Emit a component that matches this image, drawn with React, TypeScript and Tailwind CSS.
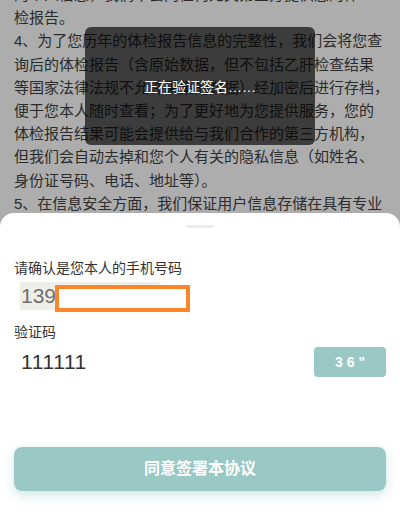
const LINES = [
  '的个人信息，我们不会向任何无关第三方提供您的体',
  '检报告。',
  '4、为了您历年的体检报告信息的完整性，我们会将您查',
  '询后的体检报告（含原始数据，但不包括乙肝检查结果',
  '等国家法律法规不允许采集的数据）经加密后进行存档，',
  '便于您本人随时查看；为了更好地为您提供服务，您的',
  '体检报告结果可能会提供给与我们合作的第三方机构，',
  '但我们会自动去掉和您个人有关的隐私信息（如姓名、',
  '身份证号码、电话、地址等）。',
  '5、在信息安全方面，我们保证用户信息存储在具有专业',
  '资质的服务器中，并采取严格的安全措施防止泄露。',
]

const cjk = "font-['Liberation_Sans','Noto_Sans_CJK_SC',sans-serif]"

export default function App() {
  return (
    <div className={`relative h-[523px] w-[400px] overflow-hidden bg-[#adadad] ${cjk}`}>
      {/* agreement text behind the mask */}
      <div className="mt-[-17px] px-[14px] text-[15px] leading-[23.2px] text-[#2b2b2b]">
        {LINES.map((l, i) => (
          <div key={i} className="whitespace-nowrap">{l}</div>
        ))}
      </div>

      {/* toast */}
      <div className="absolute left-[85px] top-[27px] flex h-[118px] w-[230px] items-center justify-center rounded-[6px] bg-black/65 pt-[2px] text-[14px] text-white">
        正在验证签名……
      </div>

      {/* bottom sheet */}
      <div className="absolute inset-x-0 bottom-0 flex h-[310px] flex-col rounded-t-[14px] bg-white px-[14px]">
        <div className="mx-auto mt-[12px] h-[3px] w-[28px] rounded-full bg-[#ececec]" />

        <div className="mt-[30px] text-[14px] leading-[20px] text-[#333]">请确认是您本人的手机号码</div>
        <div className="relative ml-[6px] mt-[4px] h-[28px] w-[140px] bg-[#eeeee9] pl-px text-[21px] leading-[28px] text-[#6f6f6f]">
          139
          <div className="absolute left-[35px] top-[3px] h-[27px] w-[135px] border-[4px] border-[#ff8628] bg-white" />
        </div>

        <div className="mt-[12px] text-[14px] leading-[20px] text-[#333]">验证码</div>
        <div className="mt-[5px] flex h-[30px] items-center justify-between">
          <span className="pl-[7px] text-[21px] tracking-[0.6px] text-[#333]">111111</span>
          <div className="flex h-[30px] w-[72px] items-center justify-center gap-[4px] rounded-[4px] bg-[#99c8c5] text-[14px] font-bold text-white">
            <span>3</span>
            <span>6</span>
            <span>"</span>
          </div>
        </div>

        <button className="mt-[70px] flex h-[44px] w-full items-center justify-center rounded-[8px] bg-[#99c8c5] text-[16px] font-bold text-white shadow-[0_4px_12px_rgba(120,180,180,0.35)]">
          同意签署本协议
        </button>
      </div>
    </div>
  )
}
